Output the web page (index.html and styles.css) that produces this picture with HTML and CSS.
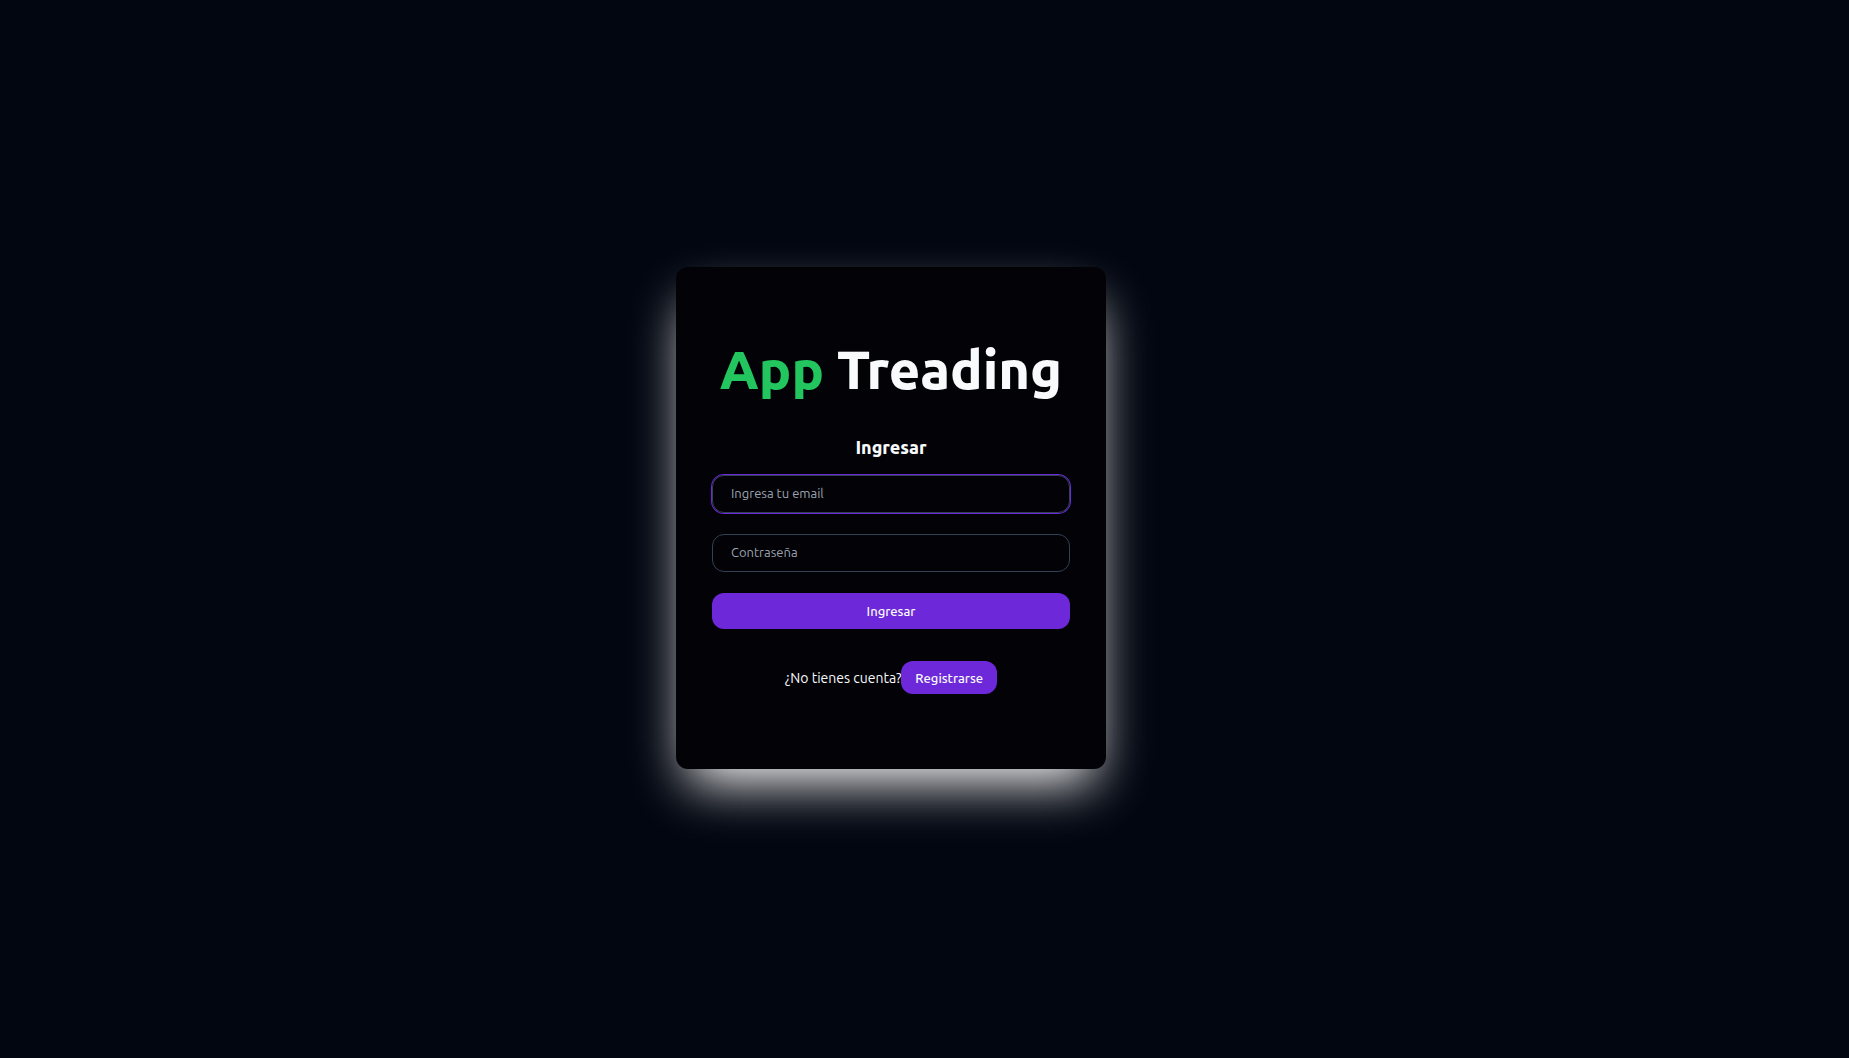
FILE: index.html
```html
<!DOCTYPE html>
<html lang="es">
<head>
  <meta charset="utf-8">
  <meta name="viewport" content="width=device-width, initial-scale=1">
  <title>App Treading</title>
  <link rel="stylesheet" href="styles.css">
</head>
<body>
  <main class="page">
    <section class="card">
      <h1 class="brand"><span class="brand-accent">App</span> Treading</h1>
      <h2 class="subtitle">Ingresar</h2>
      <form class="form">
        <input class="field field-active" type="email" name="email" placeholder="Ingresa tu email" aria-label="Ingresa tu email">
        <input class="field" type="password" name="password" placeholder="Contraseña" aria-label="Contraseña">
        <button class="button" type="submit">Ingresar</button>
      </form>
      <div class="signup">
        <p class="signup-text">¿No tienes cuenta?</p>
        <button class="button button-small" type="button">Registrarse</button>
      </div>
    </section>
  </main>
</body>
</html>
```

FILE: styles.css
```css
* {
  box-sizing: border-box;
}

body {
  margin: 0;
  background: #020610;
  color: #f8fafc;
  font-family: Ubuntu, "Noto Sans", sans-serif;
  font-size: 14px;
}

.page {
  display: flex;
  align-items: center;
  justify-content: center;
  min-height: 100vh;
  padding: 0 67px 22px 0;
}

.card {
  width: 100%;
  max-width: 430px;
  padding: 72px 36px 75px;
  border-radius: 12px;
  background: #020207;
  box-shadow: 0 25px 50px -12px #fff;
}

.brand,
.subtitle,
.signup-text {
  margin: 0;
}

.brand {
  margin-bottom: 36px;
  font-size: 54px;
  font-weight: 800;
  line-height: 60px;
  text-align: center;
  white-space: nowrap;
}

.brand-accent {
  color: #22c55e;
}

.subtitle {
  margin-bottom: 16px;
  font-size: 18px;
  font-weight: 800;
  line-height: 24px;
  text-align: center;
}

.form {
  display: flex;
  flex-direction: column;
  gap: 21px;
}

.field {
  width: 100%;
  height: 38px;
  padding: 0 18px 2px;
  border: 1px solid #334155;
  border-radius: 12px;
  outline: none;
  background: transparent;
  color: inherit;
  font: inherit;
  font-size: 13px;
}

.field::placeholder {
  color: #9ca3af;
}

.field-active,
.field:focus {
  box-shadow: 0 0 0 1px #6d28d9;
}

.button {
  height: 36px;
  padding: 0 14px;
  border: 0;
  border-radius: 12px;
  background: #6d28d9;
  color: #f8fafc;
  font: inherit;
  font-size: 13px;
  font-weight: 500;
  cursor: pointer;
}

.button-small {
  height: 33px;
}

.signup {
  display: flex;
  align-items: center;
  justify-content: center;
  margin-top: 32px;
}
```
